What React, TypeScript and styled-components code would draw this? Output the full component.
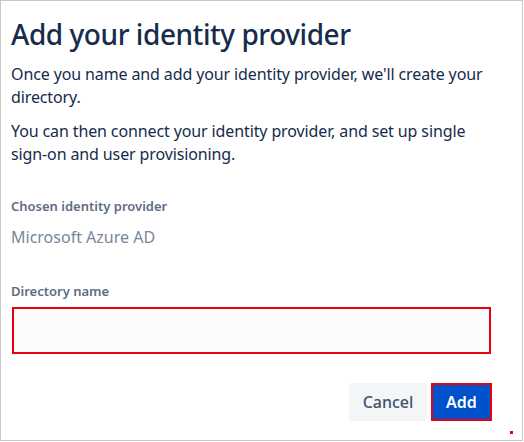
import React from 'react'
import styled, { createGlobalStyle } from 'styled-components'

const GlobalStyle = createGlobalStyle`
  html, body {
    margin: 0;
    padding: 0;
    background: #ffffff;
  }
  * {
    box-sizing: border-box;
  }
`

const App: React.FC = () => {
  return (
    <>
      <GlobalStyle />
      <Frame>
        <Title>Add your identity provider</Title>
        <Paragraph>
          Once you name and add your identity provider, we'll create your directory.
        </Paragraph>
        <Paragraph gap={11}>
          You can then connect your identity provider, and set up single sign-on and user provisioning.
        </Paragraph>

        <FieldLabel gap={32}>Chosen identity provider</FieldLabel>
        <ReadValue>Microsoft Azure AD</ReadValue>

        <FieldLabel gap={34}>Directory name</FieldLabel>
        <NameInput type="text" aria-label="Directory name" />

        <Footer>
          <CancelButton type="button">Cancel</CancelButton>
          <AddButton type="button">Add</AddButton>
        </Footer>

        <Marker />
      </Frame>
    </>
  )
}

export default App

const Frame = styled.div`
  position: relative;
  width: 523px;
  height: 441px;
  border: 1px solid #c8c8c8;
  padding: 15px 0 0 10px;
  font-family: "Noto Sans", "Open Sans", sans-serif;
  color: #172b4d;
  display: flex;
  flex-direction: column;
`

const Title = styled.h1`
  margin: 0;
  font-size: 28px;
  line-height: 36px;
  font-weight: 500;
  color: #172b4d;
  letter-spacing: -0.45px;
`

const Paragraph = styled.p<{ gap?: number }>`
  margin: ${({ gap }) => gap ?? 11}px 0 0;
  width: 490px;
  font-size: 16px;
  line-height: 23px;
  letter-spacing: -0.12px;
  color: #172b4d;
`

const FieldLabel = styled.label<{ gap: number }>`
  display: block;
  margin-top: ${({ gap }) => gap}px;
  font-size: 13px;
  line-height: 16px;
  font-weight: 600;
  color: #5e6c84;
`

const ReadValue = styled.div`
  margin-top: 12px;
  font-size: 16px;
  line-height: 23px;
  color: #7a869a;
`

const NameInput = styled.input`
  margin: 8px 0 0 1px;
  width: 479px;
  height: 47px;
  border: 2px solid #ea0010;
  background: #fafbfc;
  outline: none;
  padding: 0 8px;
  font-family: inherit;
  font-size: 14px;
`

const Footer = styled.div`
  margin-top: 29px;
  width: 481px;
  display: flex;
  justify-content: flex-end;
  gap: 4px;
`

const CancelButton = styled.button`
  width: 78px;
  height: 38px;
  border: none;
  border-radius: 3px;
  background: #f4f5f7;
  color: #42526e;
  font-family: inherit;
  font-size: 16px;
  font-weight: 500;
  cursor: pointer;
`

const AddButton = styled.button`
  width: 61px;
  height: 38px;
  border: 2px solid #ea0010;
  border-radius: 0;
  background: #0052cc;
  color: #ffffff;
  font-family: inherit;
  font-size: 16px;
  font-weight: 600;
  cursor: pointer;
`

const Marker = styled.span`
  position: absolute;
  left: 509px;
  top: 430px;
  width: 3px;
  height: 3px;
  background: #ea0010;
`
